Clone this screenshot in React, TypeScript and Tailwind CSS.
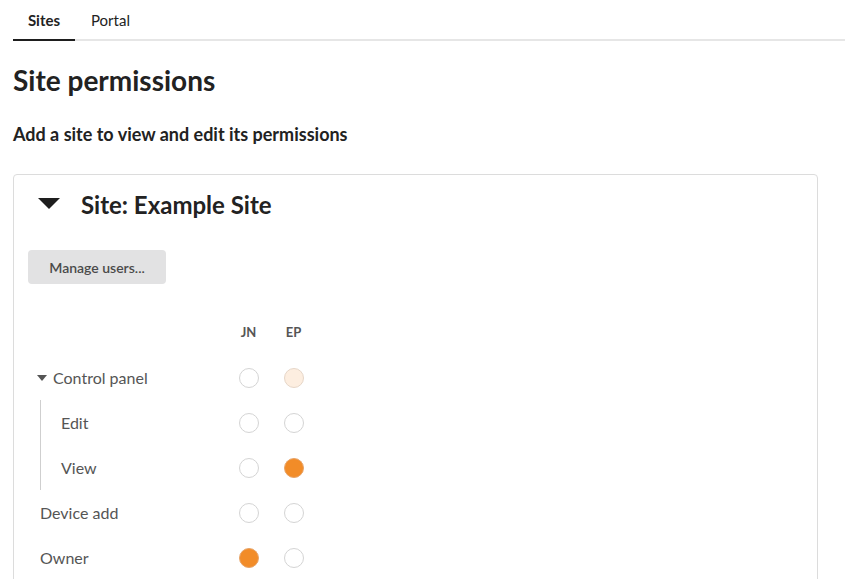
import React from "react";

type Val = "off" | "on" | "partial";

function Dot({ v }: { v: Val }) {
  const cls =
    v === "on"
      ? "bg-[#f28c28] border-[#e8a468]"
      : v === "partial"
      ? "bg-[#fdeee0] border-[#e6d6c8]"
      : "bg-white border-[#d4d4d4]";
  return (
    <div className="w-[45px] flex justify-center">
      <div className={`w-[20px] h-[20px] rounded-full border ${cls}`} />
    </div>
  );
}

function Row({ label, vals, indent, caret }: { label: string; vals: Val[]; indent?: boolean; caret?: boolean }) {
  return (
    <div className="flex items-center h-[45px]">
      <div className="w-[198px] flex items-center h-full">
        {indent ? (
          <div className="flex items-center h-full pl-[12px]">
            <div className="w-px h-full bg-[#cfcfcf]" />
            <span className="pl-[20px] text-[16px] text-[#555]">{label}</span>
          </div>
        ) : caret ? (
          <div className="flex items-center pl-[9px]">
            <svg width="10" height="6" viewBox="0 0 10 6" className="mr-[6px]">
              <polygon points="0,0 10,0 5,6" fill="#555" />
            </svg>
            <span className="text-[16px] text-[#555]">{label}</span>
          </div>
        ) : (
          <span className="pl-[12px] text-[16px] text-[#555]">{label}</span>
        )}
      </div>
      {vals.map((v, i) => (
        <Dot key={i} v={v} />
      ))}
    </div>
  );
}

export default function App() {
  return (
    <div className="bg-white min-h-[579px] pl-[13px] pr-[9px]" style={{ fontFamily: "Lato, 'Noto Sans', sans-serif" }}>
      <div className="flex border-b-2 border-[#e6e6e6] h-[41px]">
        <div className="w-[62px] flex items-center justify-center pt-[1px] text-[15px] font-bold text-[#222] border-b-2 border-[#1e1e1e] -mb-[2px]">
          Sites
        </div>
        <div className="pl-[16px] pr-[16px] pt-[1px] flex items-center text-[15px] text-[#222]">Portal</div>
      </div>
      <h1 className="text-[28px] font-bold text-[#222] mt-[21px] leading-[36px]">Site permissions</h1>
      <h2 className="text-[18px] font-bold text-[#222] mt-[24px] leading-[24px]">Add a site to view and edit its permissions</h2>
      <div className="w-[805px] mt-[28px] border border-[#dcdcdc] rounded-[4px] pl-[14px] pb-[20px] h-[420px]">
        <div className="flex items-center h-[58px] mt-[1px]">
          <svg width="22" height="11" viewBox="0 0 22 11" className="ml-[10px] mb-[4px]">
            <polygon points="0,0 22,0 11,11" fill="#1e1e1e" />
          </svg>
          <span className="ml-[21px] text-[24px] font-bold text-[#222]">Site: Example Site</span>
        </div>
        <button className="mt-[16px] w-[138px] h-[34px] rounded-[4px] bg-[#e2e2e3] text-[14px] font-semibold text-[#4a4a4a]">
          Manage users...
        </button>
        <div className="mt-[26px]">
          <div className="flex items-center h-[45px]">
            <div className="w-[198px]" />
            <div className="w-[45px] text-center text-[13px] font-bold text-[#555]">JN</div>
            <div className="w-[45px] text-center text-[13px] font-bold text-[#555]">EP</div>
          </div>
          <Row label="Control panel" vals={["off", "partial"]} caret />
          <Row label="Edit" vals={["off", "off"]} indent />
          <Row label="View" vals={["off", "on"]} indent />
          <Row label="Device add" vals={["off", "off"]} />
          <Row label="Owner" vals={["on", "off"]} />
        </div>
      </div>
    </div>
  );
}
